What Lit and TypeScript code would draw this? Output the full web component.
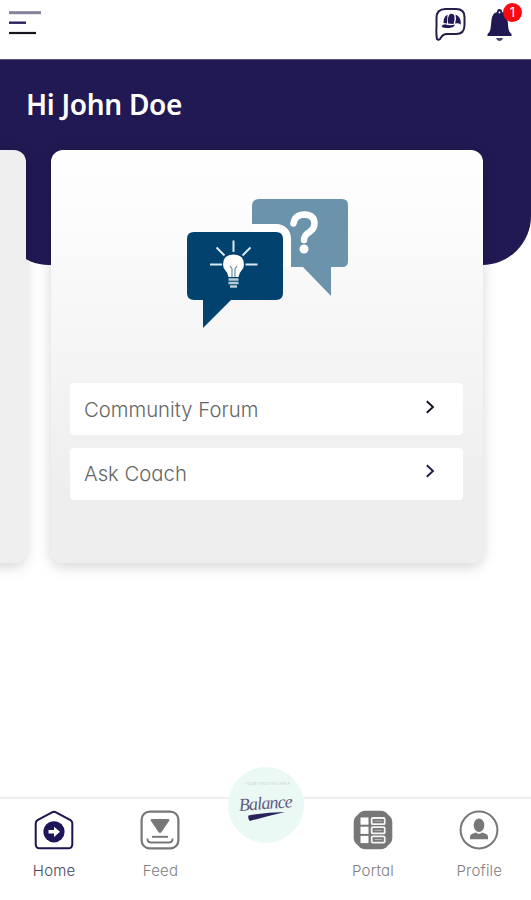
import { LitElement, html, svg, css } from "lit";
import { customElement } from "lit/decorators.js";

const chevron = html`<svg class="chev" width="10" height="14" viewBox="0 0 10 14"><path d="M1.8 1.2L8 7L1.8 12.8" fill="none" stroke="currentColor" stroke-width="1.9"/></svg>`;

const homeIcon = html`<svg width="40" height="40" viewBox="0 0 40 40">
  <path d="M18 2.3Q20 1 22 2.3L36.5 10.2Q38.3 11.3 38.3 13.3V34.2Q38.3 38.3 34.2 38.3H5.8Q1.7 38.3 1.7 34.2V13.3Q1.7 11.3 3.5 10.2Z" fill="none" stroke="#1c1550" stroke-width="2"/>
  <circle cx="20" cy="21.8" r="10.6" fill="#1e1659"/>
  <path d="M14.5 20.1H20V16.7L26 21.8L20 26.9V23.5H14.5Z" fill="#fff"/></svg>`;

const feedIcon = html`<svg width="40" height="40" viewBox="0 0 40 40" fill="none" stroke="#777">
  <rect x="1.6" y="1.6" width="36.8" height="36.8" rx="8" stroke-width="2.2"/>
  <path d="M12.2 9H27.8Q30.3 9 29 11.1L21.4 22.2Q20 23.7 18.6 22.2L11 11.1Q9.7 9 12.2 9Z" fill="#777" stroke="none"/>
  <path d="M12 26.8H28" stroke-width="1.9"/><path d="M7.5 28.5Q7.5 32.5 11 32.5H29Q32.5 32.5 32.5 28.5" stroke-width="1.9"/></svg>`;

const portalIcon = html`<svg width="40" height="40" viewBox="0 0 40 40">
  <path d="M12 .7H28Q31 .7 33 2.5L37.5 7Q39.3 9 39.3 12V28Q39.3 31 37.5 33L33 37.5Q31 39.3 28 39.3H12Q9 39.3 7 37.5L2.5 33Q.7 31 .7 28V12Q.7 9 2.5 7L7 2.5Q9 .7 12 .7Z" fill="#777"/>
  ${[7.5, 16.7, 25.9].map((y) => svg`<rect x="7.5" y=${y} width="8" height="7.2" fill="#fff"/><rect x="18.7" y=${y + 0.5} width="13" height="6.2" rx="1" fill="#777" stroke="#f4f4f4" stroke-width="1.8"/><path d=${`M21.5 ${y + 3.6}H29`} stroke="#b8b8b8" stroke-width="1"/>`)}</svg>`;

const profileIcon = html`<svg width="40" height="40" viewBox="0 0 40 40">
  <circle cx="20" cy="20" r="18.4" fill="none" stroke="#777" stroke-width="2"/>
  <ellipse cx="20" cy="15.2" rx="5.3" ry="6.8" fill="#777"/>
  <path d="M11 29.2V26.5Q11 24.3 14 23.5L17 22.5Q20 25.2 23 22.5L26 23.5Q29 24.3 29 26.5V29.2Z" fill="#777"/></svg>`;

@customElement("app-root")
export class AppRoot extends LitElement {
  static styles = css`
    :host { display: flex; flex-direction: column; width: 531px; height: 900px; overflow: hidden; background: #fff; font-family: Inter, "Noto Sans", sans-serif; font-feature-settings: "cv11"; color: #666; }
    * { box-sizing: border-box; }
    svg { display: block; flex: none; }
    .top { height: 59px; flex: none; display: flex; justify-content: space-between; align-items: flex-start; padding: 5px 16px 0 9px; }
    .menu { margin-top: 5px; }
    .actions { display: flex; gap: 19px; }
    .bell { position: relative; }
    .badge { position: absolute; left: 18px; top: -2px; width: 19px; height: 19px; border-radius: 50%; background: #fa0a12; color: #fff; font-size: 13px; line-height: 19px; text-align: center; }
    .hero { height: 206px; flex: none; background: #211953; border-top: 1px solid #59527e; border-radius: 0 0 49px 49px; padding: 27px 26px 0; }
    h1 { margin: 0; font-family: "Noto Sans", sans-serif; font-weight: 600; font-size: 28px; line-height: 34px; letter-spacing: -0.3px; color: #fff; white-space: nowrap; }
    .slides { display: flex; gap: 25px; margin: -115px 0 0 -406px; height: 413px; flex: none; }
    .card { width: 432px; flex: none; border-radius: 12px; background: linear-gradient(#fff, #eee 82%); box-shadow: 0 4px 14px rgba(0, 0, 0, 0.17); padding: 0 20px 0 19px; }
    .card.prev { background: linear-gradient(90deg, #eee, #efefef); }
    .art { height: 233px; padding: 45px 0 0 112px; }
    .row { height: 52px; margin-bottom: 13px; padding: 0 28px 0 14px; display: flex; justify-content: space-between; align-items: center; background: #fff; border-radius: 4px; font-size: 20.3px; font-weight: 300; color: #666; }
    .row + .row { padding-bottom: 1px; }
    .chev { color: #171327; margin-top: -4px; }
    .row + .row .chev { color: #211953; margin-top: -6px; }
    .nav { margin-top: auto; height: 103px; flex: none; border-top: 2px solid #eee; display: grid; grid-template-columns: repeat(5, 106.3px); padding: 11px 0 0 1px; }
    .tab { display: flex; flex-direction: column; align-items: center; gap: 11px; font-size: 15px; line-height: 20px; font-weight: 300; letter-spacing: 0.2px; color: #808080; }
    .tab.on { color: #4a4660; }
    .center { display: flex; justify-content: center; }
    .logo { margin: -43px 0 0 -2px; overflow: visible; }
    .script { font-family: "Liberation Serif", serif; font-style: italic; }
  `;

  render() {
    return html`
      <header class="top">
        <svg class="menu" width="33" height="26" viewBox="0 0 33 26"><path d="M0 2.7H32" stroke="#85819b" stroke-width="3"/><path d="M0 12.7H17" stroke="#29205b" stroke-width="2.4"/><path d="M0 23H27" stroke="#17131d" stroke-width="2.2"/></svg>
        <div class="actions">
          <svg width="31" height="37" viewBox="0 0 31 37">
            <path d="M2 34Q1 29 1.5 22V13Q1.5 4 10.5 4H21Q29.5 4 29.5 12V20Q29.5 29 21 29H12Q8 29 6 32.5Q4 36 2 34Z" fill="none" stroke="#241e4b" stroke-width="2"/>
            <path d="M8.5 18Q8 12.5 12.5 9.5L12 18.5Z" fill="#211953"/>
            <path d="M13 18.500Q12.200 12 15 9Q18.500 8 19.500 11Q20 15 18.500 19Z" fill="#211953"/>
            <path d="M20 18.500Q22 14 20.500 9.500Q26.500 12 25.800 19.500Q23 17.500 20 18.500Z" fill="#211953"/>
            <path d="M10 19.200Q15 21 20 19.500Q19 22.500 14.500 23Q9 23.500 6.500 21.800Q7 19.500 10 19.200Z" fill="#211953"/>
          </svg>
          <div class="bell">
            <svg width="30" height="37" viewBox="0 0 30 37"><path d="M12 7Q12 4 14.5 4Q17 4 17 7Q22 8.5 22.5 15L23.5 24Q24 27 26.5 29V31H2.5V29Q5 27 5.5 24L6.5 15Q7 8.5 12 7Z" fill="#211953"/><circle cx="14.5" cy="7.5" r="1" fill="#fff"/><path d="M11 33H18Q17 36 14.5 36Q12 36 11 33Z" fill="#4b4573"/></svg>
            <span class="badge">1</span>
          </div>
        </div>
      </header>
      <section class="hero"><h1>Hi John Doe</h1></section>
      <div class="slides">
        <div class="card prev"></div>
        <div class="card">
          <div class="art">
            <svg width="172" height="140" viewBox="0 0 172 140">
              <path d="M77 4H160Q166 4 166 10V66Q166 72 160 72H149V101L121 72H109V46Q109 29 92 29H70V11Q70 4 77 4Z" fill="#6b93ac"/>
              <path d="M70 29H92Q109 29 109 46V72H101V44Q101 37 94 37H70Z" fill="#fff"/>
              <path d="M12 37H94Q101 37 101 44V98Q101 105 94 105H49L21 133V105H12Q5 105 5 98V44Q5 37 12 37Z" fill="#02426f"/>
              <path d="M111.5 28.5Q113 19.5 122.5 19.5Q132.5 20 132.5 28.5Q132.5 33.5 127.5 37Q122 40.5 122 45" fill="none" stroke="#fff" stroke-width="6.5" stroke-linecap="round"/>
              <circle cx="122" cy="54" r="4.5" fill="#fff"/>
              <path d="M51.5 45.5V57M34.5 52.5L42.5 60.5M68.5 52.5L60.5 60.5M28 69.5H40M63.5 69.5H75.5" stroke="#dde9f0" stroke-width="2"/>
              <path d="M46.5 82Q46 78 43.5 75.5Q41 73 41 69.5Q41 59.5 51.5 59.5Q62 59.5 62 69.5Q62 73 59.5 75.5Q57 78 56.5 82Z" fill="#fff"/>
              <path d="M50 82V74L48 71M53 82V74L55 71" fill="none" stroke="#7892aa" stroke-width="1.3"/>
              <path d="M46.5 84.5H56.5M46.5 88H56.5M48 91.5H55" stroke="#b8cbd9" stroke-width="2.4"/>
            </svg>
          </div>
          <div class="row"><span>Community Forum</span>${chevron}</div>
          <div class="row"><span>Ask Coach</span>${chevron}</div>
        </div>
      </div>
      <nav class="nav">
        <div class="tab on">${homeIcon}<span>Home</span></div>
        <div class="tab">${feedIcon}<span>Feed</span></div>
        <div class="center">
          <svg class="logo" width="76" height="76" viewBox="0 0 76 76">
            <circle cx="38" cy="38" r="38" fill="#ebf9f5"/>
            <text x="17" y="18" font-size="4" textLength="45" fill="#c3d0d0">YOUR TRUSTED AREA</text>
            <text class="script" x="11" y="42" font-size="18" textLength="54" fill="#5f5b82" transform="rotate(-4 38 40)">Balance</text>
            <path d="M20.5 48.5Q38 45.5 57 45Q42 48.5 22 54Q19.5 51.5 20.5 48.5Z" fill="#29235b"/>
          </svg>
        </div>
        <div class="tab">${portalIcon}<span>Portal</span></div>
        <div class="tab">${profileIcon}<span>Profile</span></div>
      </nav>`;
  }
}
